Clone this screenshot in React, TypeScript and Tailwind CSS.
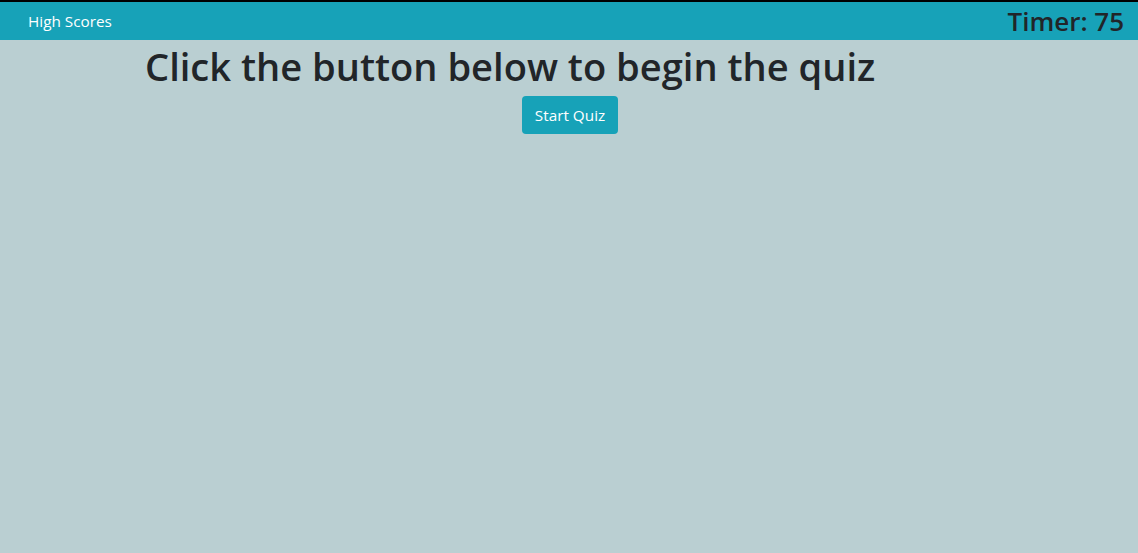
export default function App() {
  return (
    <div
      className="min-h-[553px] bg-[#bacfd2] text-[#212529]"
      style={{ fontFamily: '"Segoe UI", "Open Sans", sans-serif' }}
    >
      <nav className="flex h-10 items-center justify-between border-t-2 border-black bg-[#17a2b8] pl-7 pr-[14px]">
        <a className="text-[15.3px] text-white" href="#">
          High Scores
        </a>
        <span className="text-[26px] font-semibold leading-none">Timer: 75</span>
      </nav>
      <div className="flex flex-col">
        <h1 className="ml-[145px] mt-[4px] text-[38.1px] font-semibold leading-[1.2]">
          Click the button below to begin the quiz
        </h1>
        <div className="mt-[6px] flex justify-center pl-[2px]">
          <button className="rounded bg-[#17a2b8] px-[13px] py-[7px] text-[15.3px] leading-6 text-white">
            Start Quiz
          </button>
        </div>
      </div>
    </div>
  );
}
